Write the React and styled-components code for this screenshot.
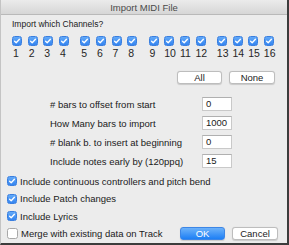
import React from 'react';
import styled, { createGlobalStyle } from 'styled-components';

const Global = createGlobalStyle`
  html, body { margin: 0; padding: 0; background: #ececec; }
  body { font-family: 'Liberation Sans', Arial, sans-serif; }
`;

const Window = styled.div`
  width: 289px;
  height: 245px;
  box-sizing: border-box;
  background: #ececec;
  border-left: 1px solid #c4c4c4;
  border-right: 2px solid #3c3c3c;
  border-bottom: 2px solid #3c3c3c;
  display: flex;
  flex-direction: column;
  color: #1a1a1a;
  overflow: hidden;
`;

const TitleBar = styled.div`
  height: 14px;
  flex: none;
  background: linear-gradient(#ebebeb, #d6d6d6);
  border-bottom: 1px solid #b9b9b9;
  display: flex;
  align-items: center;
  justify-content: center;
  font-size: 9.5px;
  color: #4a4a4a;
`;

const Body = styled.div`
  display: flex;
  flex-direction: column;
  padding: 0 12px 0 11px;
`;

const SectionLabel = styled.div`
  margin-top: 3px;
  font-size: 8.5px;
  line-height: 12px;
`;

const ChannelGrid = styled.div`
  margin-top: 6px;
  display: flex;
  gap: 5.67px;
`;

const Group = styled.div`
  display: flex;
`;

const Cell = styled.div`
  width: 15.67px;
  display: flex;
  flex-direction: column;
  align-items: flex-start;
`;

const Num = styled.span`
  margin-top: 1px;
  font-size: 10.5px;
  line-height: 12px;
  color: #262626;
  margin-left: ${p => (p.$wide ? '0' : '1px')};
`;

const Box = styled.span`
  width: ${p => p.$size}px;
  height: ${p => p.$size}px;
  box-sizing: border-box;
  flex: none;
  border-radius: 2.5px;
  display: inline-flex;
  align-items: center;
  justify-content: center;
  background: ${p => (p.$on ? 'linear-gradient(#62a9f8, #3484f0)' : '#fff')};
  border: 1px solid ${p => (p.$on ? '#3a7fe0' : '#a8a8a8')};
`;

const Check = ({ on = true, size = 10 }) => (
  <Box $on={on} $size={size}>
    {on && (
      <svg width="8" height="8" viewBox="0 0 8 8">
        <path d="M1.6 4.2 L3.2 5.8 L6.4 2.2" fill="none" stroke="#fff" strokeWidth="1.3" strokeLinecap="round" strokeLinejoin="round" />
      </svg>
    )}
  </Box>
);

const ButtonRow = styled.div`
  margin-top: 12px;
  display: flex;
  justify-content: flex-end;
  gap: 7px;
`;

const Button = styled.button`
  width: ${p => p.$w}px;
  height: 13px;
  padding: 0;
  box-sizing: border-box;
  border-radius: 3px;
  font-family: inherit;
  font-size: 9.5px;
  line-height: 11px;
  color: ${p => (p.$primary ? '#fff' : '#222')};
  background: ${p => (p.$primary ? 'linear-gradient(#6db2fa, #1d7ff5)' : '#fff')};
  border: 1px solid ${p => (p.$primary ? '#3d86e6' : '#bdbdbd')};
  box-shadow: 0 0.5px 1px rgba(0, 0, 0, 0.15);
`;

const Fields = styled.div`
  margin-top: 13px;
  padding-left: 38px;
  display: flex;
  flex-direction: column;
  gap: 5px;
`;

const FieldRow = styled.div`
  display: grid;
  grid-template-columns: 152px 30px;
  align-items: center;
  height: 14px;
  font-size: 9.5px;
`;

const Input = styled.div`
  height: 14px;
  box-sizing: border-box;
  background: #fff;
  border: 1px solid #c9c9c9;
  border-top-color: #b0b0b0;
  padding-left: 3px;
  font-size: 9.5px;
  line-height: 12px;
`;

const Options = styled.div`
  margin-top: 5px;
  margin-left: -5px;
  margin-right: -3px;
  display: flex;
  flex-direction: column;
  gap: 1.5px;
`;

const OptionRow = styled.div`
  height: 16px;
  display: flex;
  align-items: center;
  gap: 3px;
  font-size: 9.5px;
`;

const Spacer = styled.div`
  flex: 1;
`;

const Footer = styled.div`
  display: flex;
  gap: 7px;
`;

const groups = [[1, 2, 3, 4], [5, 6, 7, 8], [9, 10, 11, 12], [13, 14, 15, 16]];

const fields = [
  ['# bars to offset from start', '0'],
  ['How Many bars to import', '1000'],
  ['# blank b. to insert at beginning', '0'],
  ['Include notes early by (120ppq)', '15'],
];

export default function App() {
  return (
    <Window>
      <Global />
      <TitleBar>Import MIDI File</TitleBar>
      <Body>
        <SectionLabel>Import which Channels?</SectionLabel>
        <ChannelGrid>
          {groups.map((g, i) => (
            <Group key={i}>
              {g.map(n => (
                <Cell key={n}>
                  <Check />
                  <Num $wide={n > 9}>{n}</Num>
                </Cell>
              ))}
            </Group>
          ))}
        </ChannelGrid>
        <ButtonRow>
          <Button $w={45}>All</Button>
          <Button $w={46}>None</Button>
        </ButtonRow>
        <Fields>
          {fields.map(([label, value]) => (
            <FieldRow key={label}>
              <span>{label}</span>
              <Input>{value}</Input>
            </FieldRow>
          ))}
        </Fields>
        <Options>
          <OptionRow><Check />Include continuous controllers and pitch bend</OptionRow>
          <OptionRow><Check />Include Patch changes</OptionRow>
          <OptionRow><Check />Include Lyrics</OptionRow>
          <OptionRow>
            <Check on={false} size={11} />
            Merge with existing data on Track
            <Spacer />
            <Footer>
              <Button $primary $w={45}>OK</Button>
              <Button $w={46}>Cancel</Button>
            </Footer>
          </OptionRow>
        </Options>
      </Body>
    </Window>
  );
}
